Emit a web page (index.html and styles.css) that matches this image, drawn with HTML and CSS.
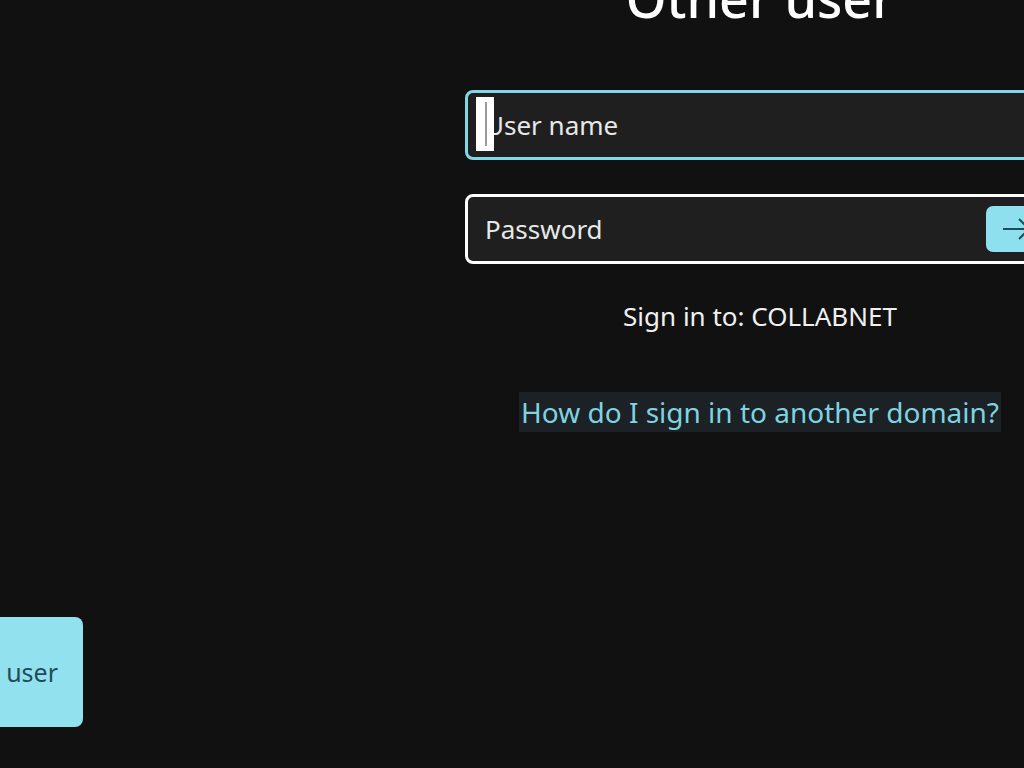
FILE: index.html
```html
<!DOCTYPE html>
<html>
<head>
    <title>Other user</title>
    <link rel="stylesheet" href="styles.css">
</head>
<body>
    <div class="screen">
        <div class="login-panel">
            <h1 class="title">Other user</h1>

            <div class="field field-active">
                <span class="caret"></span>
                <span class="placeholder">User name</span>
            </div>

            <div class="field field-password">
                <span class="placeholder">Password</span>
                <button class="submit" aria-label="Sign in">
                    <svg width="40" height="24" viewBox="0 0 40 24">
                        <path d="M8 12 H34 M24 2 L34 12 L24 22" fill="none" stroke="#1d4d5c" stroke-width="2"/>
                    </svg>
                </button>
            </div>

            <p class="domain">Sign in to: COLLABNET</p>

            <a class="help-link" href="#">How do I sign in to another domain?</a>
        </div>

        <!-- user list bottom-left -->
        <div class="user-list">
            <div class="user-tile">Other user</div>
        </div>
    </div>
</body>
</html>
```

FILE: styles.css
```css
body {
    margin: 0;
    padding: 0;
    background-color: #111111;
    font-family: 'Noto Sans', 'Open Sans', sans-serif;
    color: #ffffff;
    height: 768px;
    overflow: hidden;
}

.screen {
    display: flex;
    flex-direction: column;
    height: 768px;
}

.login-panel {
    display: flex;
    flex-direction: column;
    align-items: center;
    width: 590px;
    margin-left: 465px;
}

.title {
    margin: -34px 0 0 0;
    font-size: 52px;
    font-weight: 500;
    line-height: 64px;
    white-space: nowrap;
}

.field {
    box-sizing: border-box;
    width: 590px;
    height: 70px;
    border: 3px solid #ffffff;
    border-radius: 8px;
    background-color: #1f1f1f;
    display: flex;
    align-items: center;
    padding-left: 17px;
    position: relative;
}

.field-active {
    margin-top: 60px;
    border-color: #80d8e6;
}

.field-password {
    margin-top: 34px;
}

.placeholder {
    font-size: 26px;
    color: #e8e8e8;
}

.caret {
    position: absolute;
    left: 8px;
    top: 4px;
    width: 18px;
    height: 54px;
    background-color: #ffffff;
}

.caret::after {
    content: '';
    position: absolute;
    left: 9px;
    top: 5px;
    width: 2px;
    height: 44px;
    background-color: #9a9a9a;
}

.submit {
    margin-left: auto;
    margin-right: 8px;
    width: 58px;
    height: 46px;
    border: none;
    border-radius: 7px;
    background-color: #8fe0ee;
    display: flex;
    align-items: center;
    justify-content: center;
    padding: 0;
}

.domain {
    margin: 34px 0 0 0;
    font-size: 26px;
    color: #f0f0f0;
    white-space: nowrap;
}

.help-link {
    margin-top: 58px;
    padding: 0 2px;
    height: 40px;
    line-height: 40px;
    font-size: 28px;
    color: #7fd3e0;
    background-color: #1b2124;
    text-decoration: none;
    white-space: nowrap;
}

.user-list {
    margin-top: auto;
    margin-bottom: 41px;
}

.user-tile {
    box-sizing: border-box;
    width: 200px;
    height: 110px;
    margin-left: -117px;
    border-radius: 8px;
    background-color: #92e1ee;
    color: #1f4b5a;
    font-size: 25px;
    display: flex;
    align-items: center;
    justify-content: flex-end;
    padding-right: 25px;
}
```
